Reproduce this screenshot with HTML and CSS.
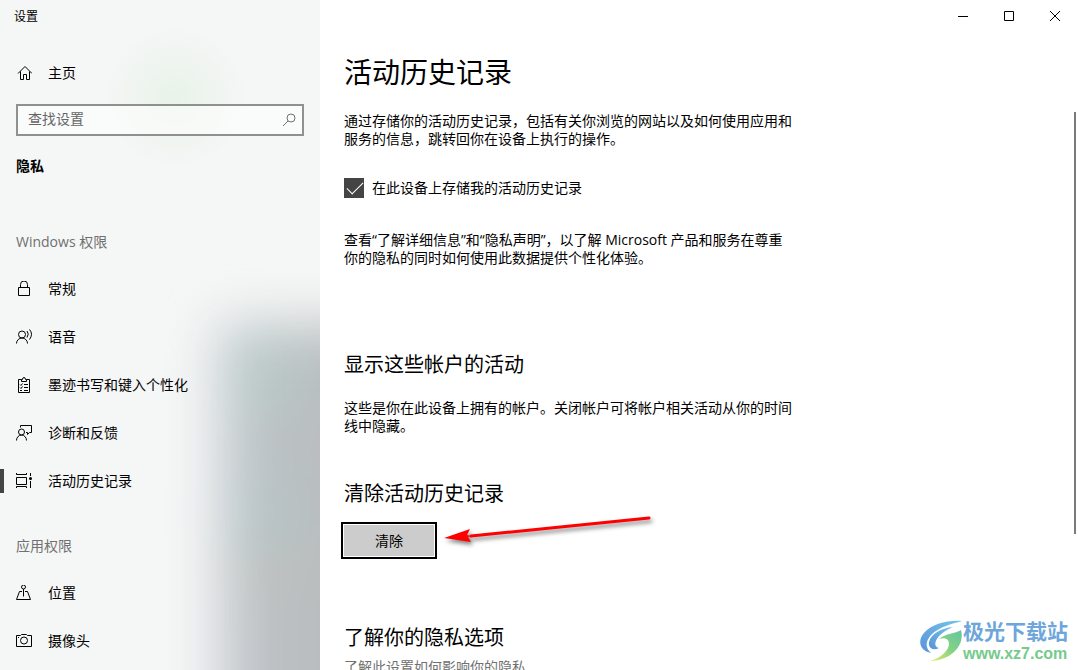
FILE: index.html
```html
<!DOCTYPE html>
<html lang="zh-CN">
<head>
  <meta charset="UTF-8" />
  <meta name="viewport" content="width=device-width, initial-scale=1.0"/>
  <title>设置</title>
  <link rel="stylesheet" href="styles.css">
</head>
<body>
  <div class="window">
    <aside class="sidebar">
      <div class="window-title">设置</div>

      <a class="nav-item home" href="#">
        <svg class="icon" viewBox="0 0 16 16"><path d="M2 8.500 9 1.500 16 8.500M4.500 6.500V14.500H7.500V9.500H10.500V14.500H13.500V6.500"/></svg>
        主页
      </a>

      <form class="search">
        <input type="text" aria-label="查找设置" placeholder="查找设置" />
        <button type="button" aria-label="搜索">
          <svg class="icon" viewBox="0 0 16 16"><circle cx="10" cy="6" r="4"/><path d="M7 9 2 14"/></svg>
        </button>
      </form>

      <h2 class="category">隐私</h2>

      <h3 class="group-title">Windows 权限</h3>
      <nav class="nav">
        <a class="nav-item" href="#">
          <svg class="icon" viewBox="0 0 16 16"><path d="M2.500 6.500H13.500V14.500H2.500ZM4.500 6.500V3.500A3.500 3.500 0 0 1 11.500 3.500V6.500"/></svg>
          常规
        </a>
        <a class="nav-item" href="#">
          <svg class="icon" viewBox="0 0 16 16"><circle cx="6" cy="5.500" r="3.500"/><path d="M.5 14.500A5.500 5.500 0 0 1 11.500 14.500M11 2Q13.500 5 11 8.500M13.500 .5Q17.500 5 13.500 10.500"/></svg>
          语音
        </a>
        <a class="nav-item" href="#">
          <svg class="icon" viewBox="0 0 16 16"><path d="M5.500 2.500H2.500V15.500H13.500V2.500H10.500M5.500 4.500V2.500H6.500Q6.500.5 8 .5T9.500 2.500H10.500V4.500ZM4 7.500 5 8.500 6.500 6.500M4 10.500 5 11.500 6.500 9.500M4 13.500H6M8 7.500H12M8 10.500H12M8 13.500H12"/></svg>
          墨迹书写和键入个性化
        </a>
        <a class="nav-item" href="#">
          <svg class="icon" viewBox="0 0 16 16"><circle cx="5.500" cy="7" r="3"/><path d="M.5 15.500A5 5.500 0 0 1 10.500 15.500M4.500 2.500V.5H15.500V7.500H13.500L11.500 9.500V7.500H10"/></svg>
          诊断和反馈
        </a>
        <a class="nav-item active" href="#" aria-current="page">
          <svg class="icon" viewBox="0 0 16 16"><path d="M.5 0V1.500H10.500V0M.5 4.500H10.500V11.500H.5ZM.5 15V13.500H10.500V15M14.500 0V3M14.500 8V15"/><circle class="dot" cx="14.500" cy="5.500" r="1.500"/></svg>
          活动历史记录
        </a>
      </nav>

      <h3 class="group-title">应用权限</h3>
      <nav class="nav">
        <a class="nav-item" href="#">
          <svg class="icon" viewBox="0 0 16 16"><circle cx="7.500" cy="2" r="2"/><path d="M7.500 4V11.500M6 6.500H3.500L.5 14.500H14.500L11.500 6.500H9"/></svg>
          位置
        </a>
        <a class="nav-item" href="#">
          <svg class="icon" viewBox="0 0 16 16"><path d="M.5 2.500H4.500L5.500 1.500H10.500L11.500 2.500H15.500V13.500H.5ZM2 4.500H3"/><circle cx="8" cy="7.500" r="3.500"/></svg>
          摄像头
        </a>
      </nav>
    </aside>

    <main class="main">
      <div class="window-controls">
        <button type="button" aria-label="最小化"><svg viewBox="0 0 10 10"><path d="M0 5.500H10"/></svg></button>
        <button type="button" aria-label="最大化"><svg viewBox="0 0 10 10"><path d="M.5.5H9.500V9.500H.5Z"/></svg></button>
        <button type="button" aria-label="关闭"><svg viewBox="0 0 10 10"><path d="M0 0 10 10M10 0 0 10"/></svg></button>
      </div>

      <div class="content">
        <h1>活动历史记录</h1>
        <p>通过存储你的活动历史记录，包括有关你浏览的网站以及如何使用应用和服务的信息，跳转回你在设备上执行的操作。</p>

        <label class="checkbox">
          <input type="checkbox" checked />
          在此设备上存储我的活动历史记录
        </label>

        <p>查看“了解详细信息”和“隐私声明”，以了解 Microsoft 产品和服务在尊重你的隐私的同时如何使用此数据提供个性化体验。</p>

        <section class="accounts">
          <h2>显示这些帐户的活动</h2>
          <p>这些是你在此设备上拥有的帐户。关闭帐户可将帐户相关活动从你的时间线中隐藏。</p>
        </section>

        <section class="clear">
          <h2>清除活动历史记录</h2>
          <div class="clear-row">
            <button type="button" class="clear-button">清除</button>
            <svg class="arrow" viewBox="0 0 216 40"><path class="line" d="M30 23 208 5"/><path class="head" d="M3 25 29 16 26 22 30 23 27 24 30 29Z"/></svg>
          </div>
        </section>

        <section class="options">
          <h2>了解你的隐私选项</h2>
          <p class="hint">了解此设置如何影响你的隐私</p>
        </section>
      </div>

      <div class="scroll-thumb"></div>

      <div class="watermark">
        <svg class="logo" viewBox="0 0 44 42">
          <defs>
            <linearGradient id="blue" x1="0" y1="1" x2="1" y2="0"><stop offset="0" stop-color="#5b93d8"/><stop offset="1" stop-color="#74c4ea"/></linearGradient>
            <linearGradient id="green" x1="0" y1="1" x2="1" y2="0"><stop offset="0" stop-color="#e6ec6a"/><stop offset="0.500" stop-color="#86d283"/><stop offset="1" stop-color="#66c4a4"/></linearGradient>
          </defs>
          <path fill="url(#blue)" d="M43 1C28 0 13 4 5 13C-2 21 1 31 12 33C6 28 6 21 13 14C21 7 32 4 43 1Z"/>
          <path fill="url(#blue)" d="M34 7C22 8 12 14 10 22C9 28 14 31 20 28C15 27 15 22 20 16C24 12 29 9 34 7Z"/>
          <path fill="url(#green)" d="M20 19C27 13 36 14 42 10C46 24 34 40 11 41C22 38 30 30 30 24C30 19 26 17 20 19Z"/>
        </svg>
        <div>
          <div class="site-name">极光下载站</div>
          <div class="site-url">www.xz7.com</div>
        </div>
      </div>
    </main>
  </div>
</body>
</html>
```

FILE: styles.css
```css
* {
  box-sizing: border-box;
}

body {
  margin: 0;
  font-family: "Open Sans", "Noto Sans CJK SC", sans-serif;
  font-size: 14px;
  line-height: 18px;
  color: #000000;
  background-color: #ffffff;
}

h1, h2, h3, p {
  margin: 0;
  font-weight: normal;
}

button, input {
  font: inherit;
  color: inherit;
}

.window {
  display: flex;
  height: 100vh;
  overflow: hidden;
}

.sidebar {
  position: relative;
  flex: 0 0 320px;
  overflow: hidden;
  background: radial-gradient(circle at 175px 97px, #e8f3e8, rgba(232, 243, 232, 0) 70px), #f5f6f6;
}

/* blurred desktop behind the sidebar */
.sidebar::before {
  content: "";
  position: absolute;
  left: 220px;
  top: 325px;
  right: -80px;
  bottom: -80px;
  background:
    radial-gradient(circle at 46px 52px, #b6cdc8, rgba(182, 205, 200, 0) 60px),
    radial-gradient(circle at 46px 185px, #b4c6c9, rgba(180, 198, 201, 0) 60px),
    radial-gradient(circle at 50px 240px, #bfc1b9, rgba(191, 193, 185, 0) 50px),
    linear-gradient(to right, #c2c8ce, #babdbf 80px);
  filter: blur(26px);
}

.sidebar > * {
  position: relative;
}

.window-title {
  padding: 1px 0 0 14px;
  font-size: 12px;
  line-height: 32px;
}

.nav-item {
  display: flex;
  align-items: center;
  gap: 16px;
  height: 48px;
  padding-left: 16px;
  color: inherit;
  text-decoration: none;
}

.home {
  margin: 16px 0 7px;
}

.icon {
  width: 16px;
  height: 16px;
  fill: none;
  stroke: currentColor;
}

.icon .dot {
  fill: currentColor;
  stroke: none;
}

.active::before {
  content: "";
  position: absolute;
  left: 0;
  width: 4px;
  height: 24px;
  background-color: #444444;
}

.nav-item.active {
  position: relative;
}

.search {
  display: flex;
  height: 32px;
  margin: 0 16px;
  border: 2px solid #8f918f;
  background-color: rgba(255, 255, 255, 0.5);
}

.search input {
  flex: 1;
  min-width: 0;
  padding: 0 10px 2px;
  border: none;
  background: none;
}

.search input::placeholder {
  color: #666666;
  opacity: 1;
}

.search button {
  padding: 0 5px;
  border: none;
  background: none;
  color: #707070;
}

.search .icon {
  display: block;
}

.category {
  margin: 20px 16px 56px;
  font-size: 14px;
  font-weight: bold;
  line-height: 20px;
}

.group-title {
  margin: 0 16px 13px;
  font-size: 14px;
  line-height: 20px;
  color: #707070;
}

.nav + .group-title {
  margin-top: 31px;
}

.main {
  position: relative;
  flex: 1;
  min-width: 0;
}

.window-controls {
  display: flex;
  justify-content: flex-end;
  height: 32px;
}

.window-controls button {
  display: flex;
  align-items: center;
  justify-content: center;
  width: 46px;
  padding: 0;
  border: none;
  background: none;
}

.window-controls svg {
  width: 10px;
  height: 10px;
  fill: none;
  stroke: #000000;
}

.content {
  max-width: 500px;
  padding: 22px 24px 0;
}

h1 {
  margin-bottom: 22px;
  font-size: 28px;
  line-height: 36px;
}

.content h2 {
  font-size: 20px;
  line-height: 28px;
}

.checkbox {
  display: flex;
  align-items: center;
  gap: 8px;
  margin: 30px 0 33px;
}

.checkbox input {
  appearance: none;
  width: 20px;
  height: 20px;
  margin: 0;
  background-color: #444444;
}

.checkbox input:checked::before {
  content: "";
  display: block;
  width: 15px;
  height: 7px;
  margin: 4px 3px;
  border-left: 1px solid #ffffff;
  border-bottom: 1px solid #ffffff;
  transform: rotate(-45deg);
}

.accounts {
  margin-top: 84px;
}

.accounts p {
  margin-top: 20px;
}

.clear {
  margin-top: 45px;
}

.clear-row {
  position: relative;
  margin-top: 17px;
}

.clear-button {
  display: block;
  width: 90px;
  height: 31px;
  padding: 0;
  border: none;
  background-color: #cccccc;
  outline: 2px solid #000000;
  outline-offset: 1px;
}

/* red pointer drawn over the page */
.arrow {
  position: absolute;
  left: 97px;
  top: -12px;
  width: 216px;
  height: 40px;
  filter: drop-shadow(2px 3px 2px rgba(0, 0, 0, 0.5));
}

.arrow .line {
  stroke: #ff0000;
  stroke-width: 3;
  stroke-linecap: round;
}

.arrow .head {
  fill: #ff0000;
}

.options {
  margin-top: 68px;
}

.hint {
  margin-top: 6px;
  color: #707070;
}

.scroll-thumb {
  position: absolute;
  top: 112px;
  right: 2px;
  width: 2px;
  height: 63%;
  background-color: #7a7a7a;
}

.watermark {
  position: absolute;
  right: 10px;
  bottom: 6px;
  display: flex;
  align-items: center;
}

.logo {
  width: 44px;
  height: 42px;
}

.site-name {
  font-size: 21px;
  font-weight: bold;
  line-height: 26px;
  color: #6ea6dc;
}

.site-url {
  font-family: "Liberation Sans", sans-serif;
  font-size: 16px;
  font-weight: bold;
  line-height: 20px;
  color: #74cb8c;
}
```
